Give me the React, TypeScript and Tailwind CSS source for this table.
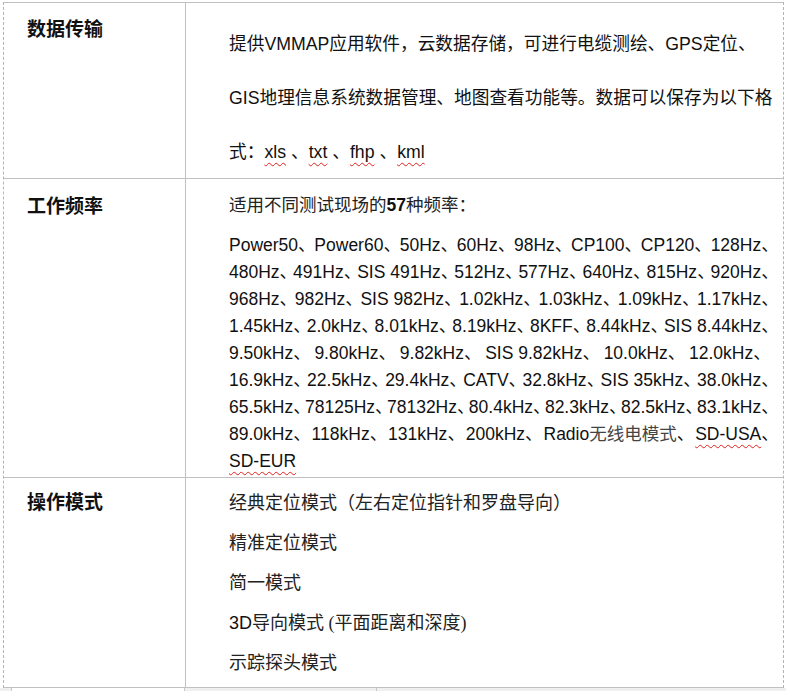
const sans = "font-['Liberation_Sans','Noto_Sans_CJK_SC',sans-serif]";
const serif = "font-['Liberation_Serif','Noto_Sans_CJK_SC',serif]";
const squiggle =
  "underline decoration-wavy decoration-[#e0201b] decoration-1 underline-offset-[4px]";

const freqLines: string[][] = [
  ["Power50", "Power60", "50Hz", "60Hz", "98Hz", "CP100", "CP120", "128Hz"],
  ["480Hz", "491Hz", "SIS 491Hz", "512Hz", "577Hz", "640Hz", "815Hz", "920Hz"],
  ["968Hz", "982Hz", "SIS 982Hz", "1.02kHz", "1.03kHz", "1.09kHz", "1.17kHz"],
  ["1.45kHz", "2.0kHz", "8.01kHz", "8.19kHz", "8KFF", "8.44kHz", "SIS 8.44kHz"],
  ["9.50kHz", "9.80kHz", "9.82kHz", "SIS 9.82kHz", "10.0kHz", "12.0kHz"],
  ["16.9kHz", "22.5kHz", "29.4kHz", "CATV", "32.8kHz", "SIS 35kHz", "38.0kHz"],
  ["65.5kHz", "78125Hz", "78132Hz", "80.4kHz", "82.3kHz", "82.5kHz", "83.1kHz"],
  ["89.0kHz", "118kHz", "131kHz", "200kHz", "Radio无线电模式", "SD-USA"],
];

function FreqItem({ item }: { item: string }) {
  if (item === "Radio无线电模式") {
    return (
      <span>
        Radio<span className={`${serif} text-[#444]`}>无线电模式</span>、
      </span>
    );
  }
  if (item === "SD-USA")
    return (
      <span>
        <span className={squiggle}>{item}</span>、
      </span>
    );
  return <span>{item}、</span>;
}

function Heading({ children }: { children: string }) {
  return (
    <div className={`${serif} font-bold text-[19px] leading-[24px] text-[#111]`}>
      {children}
    </div>
  );
}

export default function App() {
  return (
    <div className="w-[786px] h-[691px] bg-white overflow-hidden pt-[2px]">
      <div className="ml-[3px] w-[781px] border-x border-dashed border-[#b4b4b4]">
        {/* row 1 */}
        <div className="grid grid-cols-[182px_1fr] border-y border-[#c0c0c0] h-[177px]">
          <div className="border-r border-[#c0c0c0] pl-[23px] pt-[15px]">
            <Heading>数据传输</Heading>
          </div>
          <div className={`${sans} pl-[43px] pt-[14px] text-[17.7px] leading-[54px] text-[#111] whitespace-nowrap`}>
            <div>提供VMMAP应用软件，云数据存储，可进行电缆测绘、GPS定位、</div>
            <div>GIS地理信息系统数据管理、地图查看功能等。数据可以保存为以下格</div>
            <div>
              式：<span className={squiggle}>xls</span> 、<span className={squiggle}>txt</span> 、
              <span className={squiggle}>fhp</span> 、<span className={squiggle}>kml</span>
            </div>
          </div>
        </div>

        {/* row 2 */}
        <div className="grid grid-cols-[182px_1fr] border-b border-[#c0c0c0] h-[299px]">
          <div className="border-r border-[#c0c0c0] pl-[23px] pt-[16px]">
            <Heading>工作频率</Heading>
          </div>
          <div className="pl-[43px] pr-[13px] pt-[13px]">
            <div className={`${serif} text-[17.5px] leading-[26px] text-[#222]`}>
              适用不同测试现场的<span className={`${sans} font-bold text-[#111]`}>57</span>种频率：
            </div>
            <div className={`${sans} mt-[14px] text-[17.5px] text-[#111] whitespace-nowrap [font-feature-settings:'halt']`}>
              {freqLines.map((line, i) => (
                <div
                  key={i}
                  className={`flex justify-between items-center h-[27px] ${i === 4 ? "pr-[8px]" : ""}`}
                >
                  {line.map((item, j) => (
                    <FreqItem key={j} item={item} />
                  ))}
                </div>
              ))}
              <div className="h-[27px] flex items-center">
                <span className={squiggle}>SD-EUR</span>
              </div>
            </div>
          </div>
        </div>

        {/* row 3 */}
        <div className="grid grid-cols-[182px_1fr] border-b border-[#c0c0c0] h-[210px]">
          <div className="border-r border-[#c0c0c0] pl-[23px] pt-[13px]">
            <Heading>操作模式</Heading>
          </div>
          <div className={`${serif} pl-[43px] pt-[5px] text-[18px] leading-[40px] text-[#222] whitespace-nowrap`}>
            <div>经典定位模式（左右定位指针和罗盘导向）</div>
            <div>精准定位模式</div>
            <div>简一模式</div>
            <div>
              <span className={`${sans} text-[#111]`}>3D</span>导向模式 (平面距离和深度)
            </div>
            <div>示踪探头模式</div>
          </div>
        </div>
      </div>
      {/* next table page edge */}
      <div className="flex h-[4px] bg-[#f0f0f0]">
        <div className="w-[12px] border-r border-[#c8c8c8]" />
        <div className="w-[173px] bg-white border-r border-[#c8c8c8]" />
        <div className="w-[192px] border-r border-[#c8c8c8]" />
      </div>
    </div>
  );
}
